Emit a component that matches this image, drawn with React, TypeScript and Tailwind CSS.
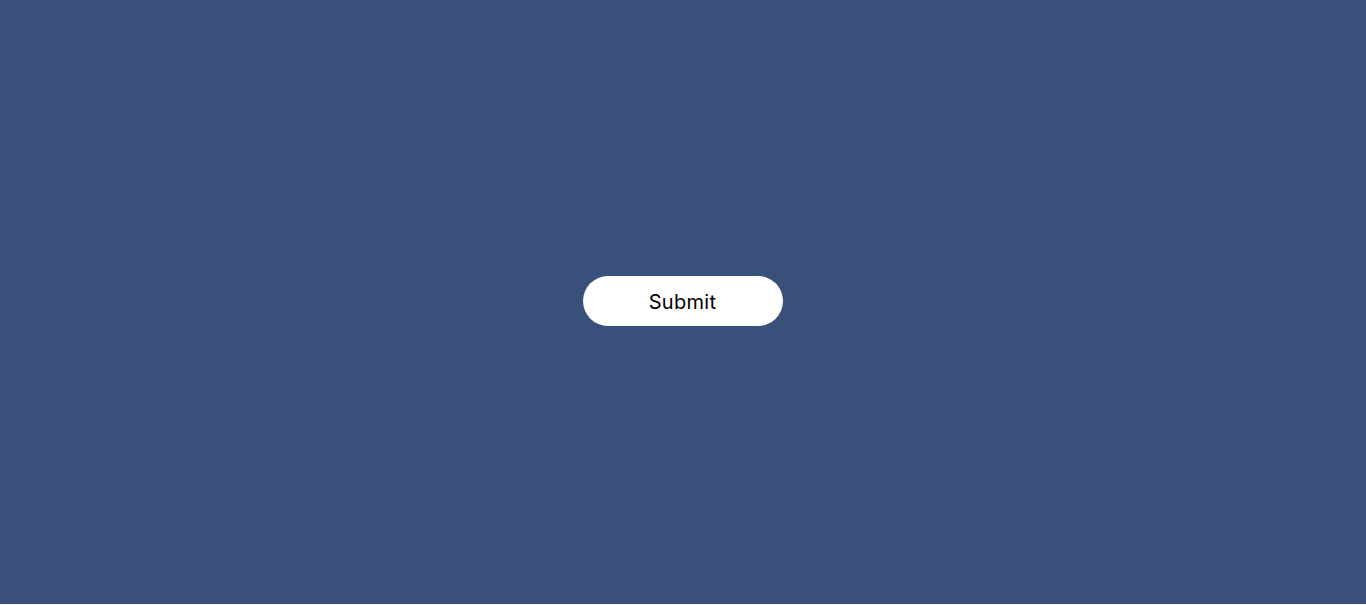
export default function App() {
  return (
    <div className="h-[604px] w-full bg-[#39507a] flex items-center justify-center">
      <button
        type="submit"
        className="w-[200px] h-[50px] rounded-full bg-white text-black text-[20px] tracking-[0.3px] pt-[3px] mt-[-3px] ml-[-1px] font-['Inter',sans-serif] cursor-pointer"
      >
        Submit
      </button>
    </div>
  );
}
